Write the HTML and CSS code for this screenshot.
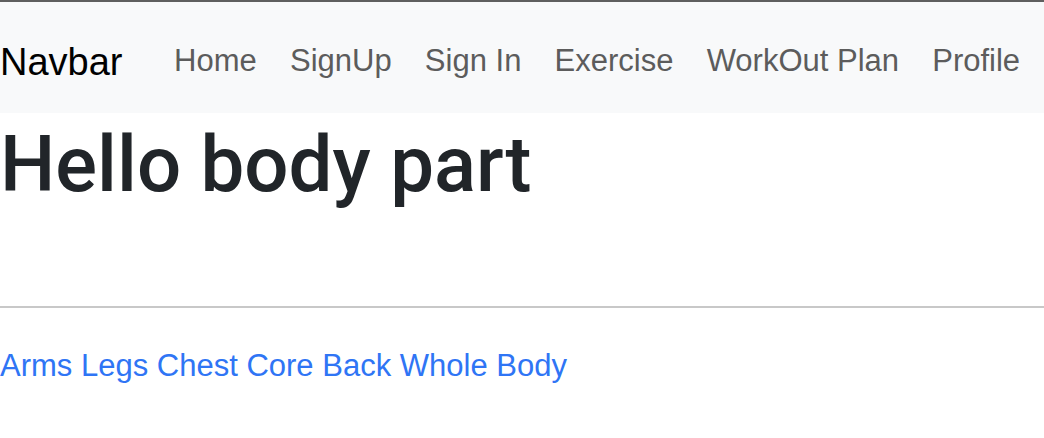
FILE: index.html
```html
<!DOCTYPE html>
<html lang="en">
<head>
<meta charset="utf-8">
<title>Body part</title>
<link rel="stylesheet" href="styles.css">
</head>
<body>
<div class="topline"></div>
<nav class="navbar">
  <a class="brand" href="#">Navbar</a>
  <ul class="nav">
    <li><a class="nav-link" href="#">Home</a></li>
    <li><a class="nav-link" href="#">SignUp</a></li>
    <li><a class="nav-link" href="#">Sign In</a></li>
    <li><a class="nav-link" href="#">Exercise</a></li>
    <li><a class="nav-link" href="#">WorkOut Plan</a></li>
    <li><a class="nav-link" href="#">Profile</a></li>
  </ul>
</nav>
<main class="content">
  <h1 class="title">Hello body part</h1>
  <hr class="divider">
  <div class="parts">
    <a href="#">Arms</a> <a href="#">Legs</a> <a href="#">Chest</a> <a href="#">Core</a> <a href="#">Back</a> <a href="#">Whole Body</a>
  </div>
</main>
</body>
</html>
```
FILE: styles.css
```css
html, body {
  margin: 0;
  padding: 0;
  background: #ffffff;
  font-family: "Liberation Sans", Arial, sans-serif;
  color: #212529;
}
.topline {
  height: 2px;
  background: #5f5f5f;
}
.navbar {
  display: flex;
  align-items: center;
  height: 111px;
  background: #f8f9fa;
  padding: 0;
  white-space: nowrap;
}
.brand {
  font-size: 38px;
  color: #000;
  text-decoration: none;
  margin-right: 35px;
  margin-top: 10px;
}
.nav {
  display: flex;
  list-style: none;
  margin: 6px 0 0;
  padding: 0;
}
.nav-link {
  display: block;
  font-size: 31px;
  color: #5c5c5c;
  text-decoration: none;
  padding: 0 16.6px;
}
.content {
  padding: 0;
}
.title {
  font-family: Roboto, "Liberation Sans", Arial, sans-serif;
  font-size: 78px;
  font-weight: 500;
  line-height: 1.2;
  margin: 5px 0 0;
  color: #212529;
}
.divider {
  border: 0;
  border-top: 2px solid #c8c8c8;
  margin: 94px 0 0;
}
.parts {
  margin-top: 40px;
  font-size: 31px;
}
.parts a {
  color: #2f75f5;
  text-decoration: none;
}
```
